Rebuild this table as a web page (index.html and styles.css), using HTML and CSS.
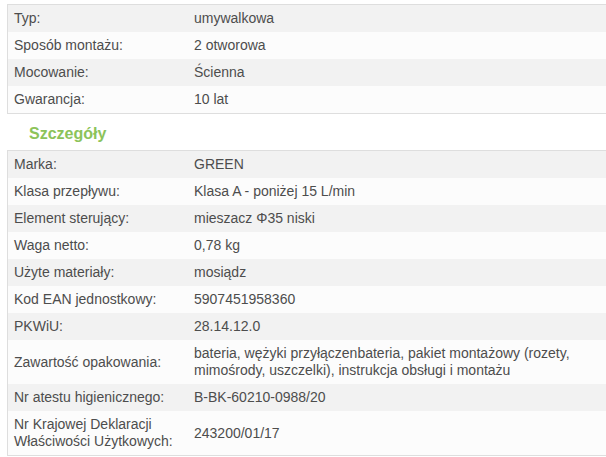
FILE: index.html
```html
<!DOCTYPE html>
<html lang="pl">
<head>
<meta charset="utf-8">
<link rel="stylesheet" href="styles.css">
</head>
<body>
<div class="page">
  <table class="specs">
    <tr><td class="label">Typ:</td><td class="value">umywalkowa</td></tr>
    <tr><td class="label">Sposób montażu:</td><td class="value">2 otworowa</td></tr>
    <tr><td class="label">Mocowanie:</td><td class="value">Ścienna</td></tr>
    <tr><td class="label">Gwarancja:</td><td class="value">10 lat</td></tr>
  </table>
  <h3 class="section-title">Szczegóły</h3>
  <table class="specs">
    <tr><td class="label">Marka:</td><td class="value">GREEN</td></tr>
    <tr><td class="label">Klasa przepływu:</td><td class="value">Klasa A - poniżej 15 L/min</td></tr>
    <tr><td class="label">Element sterujący:</td><td class="value">mieszacz Φ35 niski</td></tr>
    <tr><td class="label">Waga netto:</td><td class="value">0,78 kg</td></tr>
    <tr><td class="label">Użyte materiały:</td><td class="value">mosiądz</td></tr>
    <tr><td class="label">Kod EAN jednostkowy:</td><td class="value">5907451958360</td></tr>
    <tr><td class="label">PKWiU:</td><td class="value">28.14.12.0</td></tr>
    <tr><td class="label">Zawartość opakowania:</td><td class="value">bateria, wężyki przyłączenbateria, pakiet montażowy (rozety, mimośrody, uszczelki), instrukcja obsługi i montażu</td></tr>
    <tr><td class="label">Nr atestu higienicznego:</td><td class="value">B-BK-60210-0988/20</td></tr>
    <tr><td class="label">Nr Krajowej Deklaracji Właściwości Użytkowych:</td><td class="value">243200/01/17</td></tr>
  </table>
</div>
</body>
</html>
```
FILE: styles.css
```css
html, body {
  margin: 0;
  padding: 0;
  background: #ffffff;
  overflow: hidden;
}
.page {
  width: 620px;
  padding: 4px 0 0 7px;
  font-family: "Liberation Sans", Arial, sans-serif;
  font-size: 14px;
  color: #4d4d4d;
}
.specs {
  width: 606px;
  border-collapse: collapse;
  border: 1px solid #dedede;
}
.specs td {
  padding: 5px 6px;
  line-height: 17px;
  vertical-align: middle;
}
.specs .label {
  width: 168px;
}
.specs .value {
  padding-right: 14px;
}
.specs tr:nth-child(odd) td {
  background: #f2f2f2;
}
.specs tr:nth-child(even) td {
  background: #fcfcfc;
}
.section-title {
  margin: 0;
  padding: 10px 0 6px 22px;
  font-size: 16px;
  line-height: 20px;
  font-weight: bold;
  color: #8cc35a;
}
```
